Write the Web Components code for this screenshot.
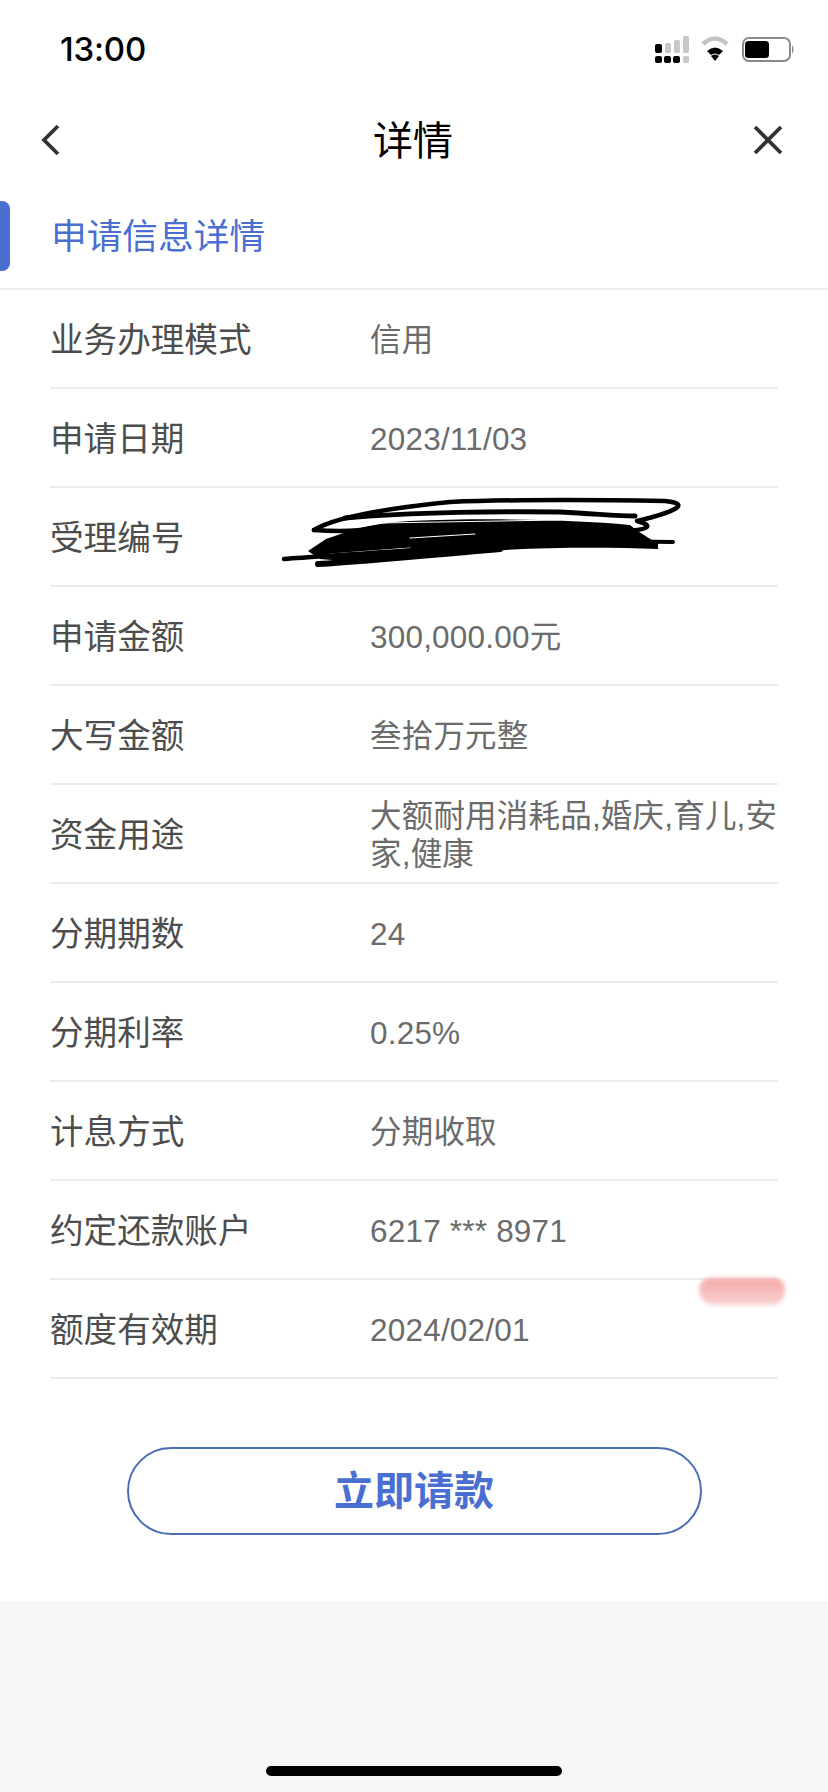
<!DOCTYPE html>
<html lang="zh">
<head>
<meta charset="utf-8">
<title>详情</title>
<style>
  html, body {
    margin: 0;
    background: #f6f6f6;
    font-family: "Liberation Sans", "Noto Sans CJK SC", sans-serif;
  }
  .page {
    display: flex;
    flex-direction: column;
    height: 1792px;
    overflow: hidden;
  }
</style>
</head>
<body>
<div class="page">
  <status-bar time="13:00"></status-bar>
  <nav-bar title="详情"></nav-bar>
  <section-head>申请信息详情</section-head>
  <detail-list>
    <detail-row label="业务办理模式">信用</detail-row>
    <detail-row label="申请日期">2023/11/03</detail-row>
    <detail-row label="受理编号"><ink-scribble slot="over"></ink-scribble></detail-row>
    <detail-row label="申请金额">300,000.00元</detail-row>
    <detail-row label="大写金额">叁拾万元整</detail-row>
    <detail-row label="资金用途">大额耐用消耗品,婚庆,育儿,安家,健康</detail-row>
    <detail-row label="分期期数">24</detail-row>
    <detail-row label="分期利率">0.25%</detail-row>
    <detail-row label="计息方式">分期收取</detail-row>
    <detail-row label="约定还款账户">6217 *** 8971</detail-row>
    <detail-row label="额度有效期">2024/02/01<pink-smudge slot="over"></pink-smudge></detail-row>
  </detail-list>
  <action-panel>立即请款</action-panel>
  <home-area></home-area>
</div>

<script>
class StatusBar extends HTMLElement {
  constructor() {
    super();
    this.attachShadow({ mode: 'open' });
    this.shadowRoot.innerHTML = `
      <style>
        :host {
          display: flex;
          align-items: center;
          justify-content: space-between;
          height: 90px;
          padding: 8px 34px 0 60px;
          box-sizing: border-box;
          background: #fff;
        }
        .time {
          font: 500 33px/1 Inter, sans-serif;
          color: #000;
          letter-spacing: -0.2px;
        }
        svg { display: block; margin-top: 2px; }
      </style>
      <span class="time">${this.getAttribute('time')}</span>
      <svg width="140" height="28" viewBox="0 0 140 28">
        <g fill="#c8c8c8">
          <rect x="11" y="7" width="6" height="10" rx="1.5"/>
          <rect x="20" y="4" width="6" height="13" rx="1.5"/>
          <rect x="29" y="0" width="6" height="17" rx="1.5"/>
          <rect x="29" y="20" width="6" height="7" rx="1.5"/>
        </g>
        <g fill="#000">
          <rect x="1" y="8" width="7" height="9" rx="2"/>
          <rect x="1" y="20" width="7" height="7" rx="2"/>
          <rect x="10" y="20" width="7" height="7" rx="2"/>
          <rect x="19" y="20" width="7" height="7" rx="2"/>
        </g>
        <path d="M49 8 Q61 -3 73 8" fill="none" stroke="#c4c4c4" stroke-width="4.5"/>
        <path d="M53 15 Q61 8 69 15 L65 19 Q61 16 57 19Z" fill="#000"/>
        <path d="M57 20 Q61 17 65 20 L61 25Z" fill="#000"/>
        <rect x="89" y="2" width="47" height="23" rx="6" fill="none" stroke="#8a8a8a" stroke-width="2"/>
        <rect x="91" y="5" width="24" height="17" rx="3.5" fill="#000"/>
        <path d="M138 9 Q141 13 138 18Z" fill="#8a8a8a"/>
      </svg>
    `;
  }
}

class NavBar extends HTMLElement {
  constructor() {
    super();
    this.attachShadow({ mode: 'open' });
    this.shadowRoot.innerHTML = `
      <style>
        :host {
          display: grid;
          grid-template-columns: 1fr auto 1fr;
          align-items: center;
          height: 100px;
          padding: 0 45px 0 43px;
          background: #fff;
        }
        h1 {
          margin: 0 0 4px;
          font-size: 40px;
          font-weight: 400;
          color: #000;
        }
        svg { display: block; }
        .back { margin-left: -2px; }
        .close { justify-self: end; }
      </style>
      <svg class="back" width="20" height="32" viewBox="0 0 20 32"><path d="M17 2 L3 16 L17 30" fill="none" stroke="#333" stroke-width="3.8"/></svg>
      <h1>${this.getAttribute('title')}</h1>
      <svg class="close" width="30" height="30" viewBox="0 0 30 30"><path d="M2 2 L28 28 M28 2 L2 28" fill="none" stroke="#333" stroke-width="3.8"/></svg>
    `;
  }
}

class SectionHead extends HTMLElement {
  constructor() {
    super();
    this.attachShadow({ mode: 'open' });
    this.shadowRoot.innerHTML = `
      <style>
        :host {
          display: flex;
          align-items: center;
          gap: 41px;
          height: 100px;
          box-sizing: border-box;
          padding: 11px 0 17px;
          background: #fff;
          border-bottom: 2px solid #ececec;
          color: #4a6fd0;
          font-size: 35.7px;
        }
        .bar {
          width: 10px;
          height: 70px;
          background: #4a6fd0;
          border-radius: 0 8px 8px 0;
        }
        .text { margin-bottom: 5px; }
      </style>
      <span class="bar"></span>
      <span class="text"><slot></slot></span>
    `;
  }
}

class DetailList extends HTMLElement {
  constructor() {
    super();
    this.attachShadow({ mode: 'open' });
    this.shadowRoot.innerHTML = `
      <style>
        :host {
          display: flex;
          flex-direction: column;
          padding: 0 50px;
          background: #fff;
        }
      </style>
      <slot></slot>
    `;
  }
}

class DetailRow extends HTMLElement {
  constructor() {
    super();
    this.attachShadow({ mode: 'open' });
    this.shadowRoot.innerHTML = `
      <style>
        :host {
          display: grid;
          grid-template-columns: 320px 1fr;
          align-items: center;
          position: relative;
          height: 99px;
          box-sizing: border-box;
          border-bottom: 2px solid #ececec;
        }
        .label {
          font-size: 33.6px;
          color: #4d4d4d;
          margin-bottom: 2px;
        }
        .value {
          font-size: 31.5px;
          line-height: 38px;
          letter-spacing: 0.2px;
          color: #6b6b6b;
          padding-top: 2px;
        }
      </style>
      <span class="label">${this.getAttribute('label')}</span>
      <span class="value"><slot></slot></span>
      <slot name="over"></slot>
    `;
  }
}

class InkScribble extends HTMLElement {
  constructor() {
    super();
    this.attachShadow({ mode: 'open' });
    // hand drawn redaction, lies over the value of the row
    this.shadowRoot.innerHTML = `
      <style>
        :host {
          display: block;
          position: absolute;
          left: 210px;
          top: -7px;
          width: 440px;
          height: 100px;
          pointer-events: none;
        }
        svg { display: block; }
      </style>
      <svg width="440" height="100" viewBox="0 0 440 100" fill="none" stroke="#000" stroke-linecap="round" stroke-linejoin="round">
        <path stroke-width="4.5" d="M54 49 C75 36 130 27 190 21 C260 18 350 19 405 20 C426 22 426 28 377 40 C392 44 392 48 367 50"/>
        <path stroke-width="4.5" d="M54 49 C80 51 100 50 113 47"/>
        <path stroke-width="5" d="M85 37 C150 31 250 30 300 31 C340 33 355 35 375 35"/>
        <path fill="#000" stroke="none" d="M66 58 C90 50 110 42 150 40 C220 37 310 38 370 44 C380 52 390 58 398 62 L398 68 C340 66 270 66 200 72 C150 78 100 82 60 78 L48 70 Z"/>
        <path stroke="#fff" stroke-width="1.2" d="M150 57 L215 53"/>
        <path stroke="#fff" stroke-width="1" d="M120 42 L300 39"/>
        <path stroke="#fff" stroke-width="1" d="M70 73 L150 67"/>
        <path stroke-width="4" d="M333 60 L413 61"/>
        <path stroke-width="4.5" d="M24 78 C70 75 130 70 180 68"/>
        <path stroke-width="6" d="M58 83 C110 80 170 74 240 68"/>
      </svg>
    `;
  }
}

class PinkSmudge extends HTMLElement {
  constructor() {
    super();
    this.attachShadow({ mode: 'open' });
    this.shadowRoot.innerHTML = `
      <style>
        :host {
          display: block;
          position: absolute;
          left: 649px;
          top: -2px;
          width: 86px;
          height: 27px;
          border-radius: 14px 12px 16px 18px;
          background: linear-gradient(#f3a9a7, #f8c6c4 70%, #f9d2d0);
          filter: blur(2px);
        }
      </style>
    `;
  }
}

class ActionPanel extends HTMLElement {
  constructor() {
    super();
    this.attachShadow({ mode: 'open' });
    this.shadowRoot.innerHTML = `
      <style>
        :host {
          display: flex;
          justify-content: center;
          padding: 68px 0 66px 0;
          background: #fff;
        }
        button {
          width: 575px;
          height: 88px;
          padding: 0;
          border: 2px solid #4a6cb4;
          border-radius: 44px;
          background: #fff;
          color: #4a6fd0;
          font: 700 40px/1 "Liberation Sans", "Noto Sans CJK SC", sans-serif;
        }
      </style>
      <button><slot></slot></button>
    `;
  }
}

class HomeArea extends HTMLElement {
  constructor() {
    super();
    this.attachShadow({ mode: 'open' });
    this.shadowRoot.innerHTML = `
      <style>
        :host {
          flex: 1;
          display: flex;
          align-items: flex-end;
          justify-content: center;
          padding-bottom: 16px;
          background: #f6f6f6;
        }
        .indicator {
          width: 296px;
          height: 10px;
          border-radius: 5px;
          background: #000;
        }
      </style>
      <span class="indicator"></span>
    `;
  }
}

customElements.define('status-bar', StatusBar);
customElements.define('nav-bar', NavBar);
customElements.define('section-head', SectionHead);
customElements.define('detail-list', DetailList);
customElements.define('detail-row', DetailRow);
customElements.define('ink-scribble', InkScribble);
customElements.define('pink-smudge', PinkSmudge);
customElements.define('action-panel', ActionPanel);
customElements.define('home-area', HomeArea);
</script>
</body>
</html>
